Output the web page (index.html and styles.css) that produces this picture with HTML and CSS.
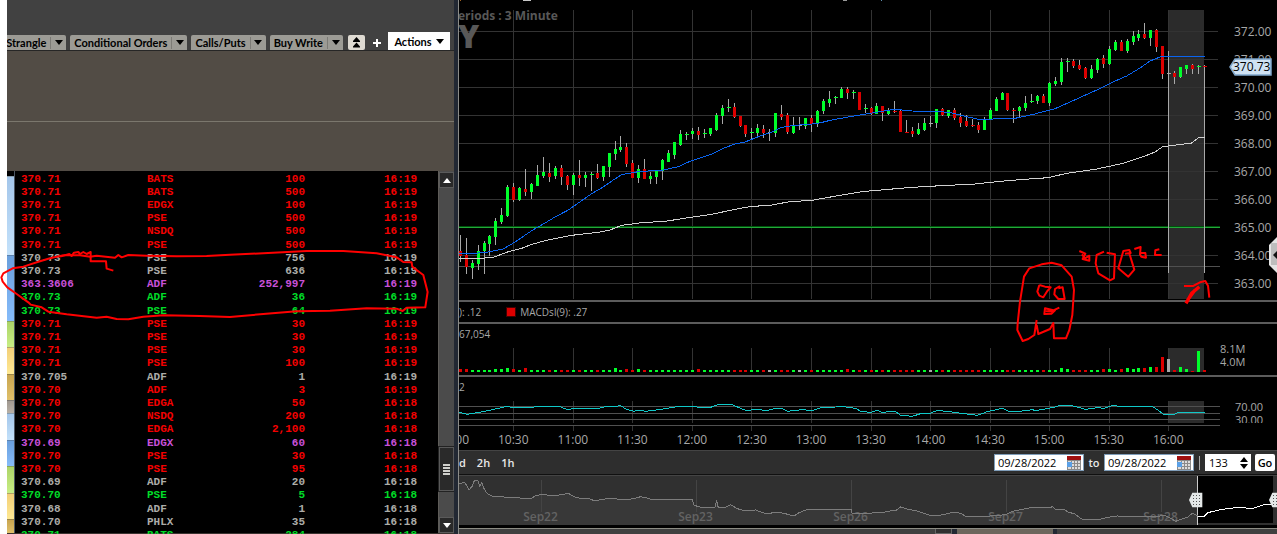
FILE: index.html
```
<!DOCTYPE html>
<html lang="en">
<head>
    <meta charset="UTF-8">
    <meta name="viewport" content="width=device-width, initial-scale=1.0">
    <title>Time and Sales</title>
    <link rel="stylesheet" href="styles.css">
</head>
<body>

<div class="app">
    <section class="left-panel">
        <div class="tab-bar">
            <button class="tab">Strangle <span class="caret"></span></button>
            <button class="tab">Conditional Orders <span class="caret"></span></button>
            <button class="tab">Calls/Puts <span class="caret"></span></button>
            <button class="tab">Buy Write <span class="caret"></span></button>
            <button class="collapse" aria-label="Collapse">
                <svg width="9" height="11" viewBox="0 0 9 11"><path d="M4.5 0L8 4H1zM4.5 5.500L8 9.500H1zM1 4h7v1H1zM1 9.500h7v1H1z"/></svg>
            </button>
            <button class="add" aria-label="Add tab">
                <svg width="8" height="8" viewBox="0 0 8 8"><path d="M3 0h2v3h3v2H5v3H3V5H0V3h3z"/></svg>
            </button>
            <button class="actions">Actions <span class="arrow"></span></button>
        </div>
        <div class="order-area"></div>
        <div class="order-footer"></div>
        <div class="tape">
            <div class="strip" id="strip"></div>
            <table>
                <tbody id="trades"></tbody>
            </table>
            <div class="scrollbar">
                <button aria-label="Scroll up"><span class="up"></span></button>
                <div class="track"></div>
                <div class="thumb"><i></i><i></i><i></i><i></i></div>
                <div class="track-end"></div>
                <button aria-label="Scroll down"><span class="down"></span></button>
            </div>
        </div>
    </section>

    <section class="right-panel">
        <div class="pane price-pane">
            <svg class="plot" id="price" viewBox="0 0 2283 900" preserveAspectRatio="none"></svg>
            <div class="axis price-axis">
                <span>372.00</span><span>371.00</span><span>370.00</span><span>369.00</span><span>368.00</span>
                <span>367.00</span><span>366.00</span><span>365.00</span><span>364.00</span><span>363.00</span>
            </div>
            <div class="watermark">eriods : 3 Minute<b>Y</b></div>
            <div class="price-tag">
                <svg width="43" height="18" viewBox="0 0 43 18"><path d="M1 9L6 1h36v16H6z" fill="#cfe2f3" stroke="#7fa6cc" stroke-width="1.500"/></svg>
                <span>370.73</span>
            </div>
            <button class="side-knob" aria-label="Open side panel">
                <svg width="9" height="36" viewBox="0 0 9 36"><path d="M9 0L1 8v20l8 8z" fill="#e4e4e4"/><path d="M9 6H3v22h6z" fill="#bdbdbd"/><path d="M9 14L5 18l4 4z" fill="#111"/></svg>
            </button>
        </div>
        <div class="pane macd-pane">
            <span>): .12</span><i class="swatch"></i><span>MACDsl(9): .27</span>
        </div>
        <div class="pane volume-pane">
            <div class="plot">
                <p class="legend">67,054</p>
                <svg id="volume" viewBox="0 0 2283 72" preserveAspectRatio="none"></svg>
            </div>
            <div class="axis volume-axis"><span>8.1M</span><span>4.0M</span></div>
        </div>
        <div class="pane rsi-pane">
            <div class="plot">
                <p class="legend">2</p>
                <svg id="rsi" viewBox="0 0 2283 90" preserveAspectRatio="none"></svg>
            </div>
            <div class="axis rsi-axis"><span>70.00</span><span>30.00</span></div>
        </div>
        <div class="times">
            <span>10:00</span><span>10:30</span><span>11:00</span><span>11:30</span><span>12:00</span><span>12:30</span><span>13:00</span><span>13:30</span><span>14:00</span><span>14:30</span><span>15:00</span><span>15:30</span><span>16:00</span>
        </div>
        <form class="range-bar">
            <button type="button" class="range">d</button>
            <button type="button" class="range">2h</button>
            <button type="button" class="range">1h</button>
            <span class="date-box">
                <input type="text" id="from" aria-label="From date" value="09/28/2022">
                <svg width="14" height="14" viewBox="0 0 14 14"><use href="#calendar"/></svg>
            </span>
            <label for="to">to</label>
            <span class="date-box">
                <input type="text" id="to" value="09/28/2022">
                <svg width="14" height="14" viewBox="0 0 14 14"><use href="#calendar"/></svg>
            </span>
            <span class="divider"></span>
            <span class="count-box">
                <input type="text" aria-label="Bars" value="133">
                <svg width="8" height="12" viewBox="0 0 8 12"><path d="M4 0L8 5H0zM4 12L0 7h8z"/></svg>
            </span>
            <button type="button" class="go">Go</button>
        </form>
        <div class="navigator">
            <svg id="nav" viewBox="0 0 2454 147" preserveAspectRatio="none"></svg>
            <div class="days"><span>Sep22</span><span>Sep23</span><span>Sep26</span><span>Sep27</span><span>Sep28</span></div>
            <svg id="navLine" viewBox="0 0 2454 147" preserveAspectRatio="none"></svg>
        </div>
        <div class="dock">
            <div class="dock-scroll"><i></i></div>
            <div class="dock-tab"></div>
            <div class="dock-rest"></div>
        </div>
    </section>
</div>

<!-- red pen marks -->
<svg class="pen" width="1277" height="534" viewBox="0 0 1277 534">
    <g transform="translate(0 170) scale(.3333)">
        <path d="M190 256L150 265 120 274 70 290 38 295 10 310 4 322 8 335 22 352 50 372 85 397 92 404 125 412 145 425 200 433 290 443 320 440 350 447 385 448 430 440 490 436 600 438 690 441 790 432 890 424 990 422 1100 415 1190 416 1208 423 1220 413 1276 412 1283 366 1270 315 1250 300 1237 290 1235 277 1210 276 1190 262 1130 250 1030 243 920 243 790 250 690 254 620 258 530 259 440 257 385 255 365 262 355 255 345 263 290 257 270 260 240 256 190 256"/>
        <path d="M180 260L208 252 215 258 222 248 235 246 240 252 250 246 260 252 272 246V274H318L320 296 340 302"/>
    </g>
    <g transform="translate(1000 235) scale(.3333)">
        <path d="M110 255L103 300 85 312 68 318 52 285 53 265 60 200 72 125 88 100 125 88 155 83 185 91 215 125 222 165 217 240 208 285 198 310H162L160 264 150 282 115 297 110 270"/>
        <path d="M118 150L112 170 118 182 130 187 142 168 152 157 135 155 118 150M180 153L165 162 163 178 175 192H194L188 157 175 160M178 218L160 226 135 220 133 237 155 236 165 226 140 229 160 230"/>
        <path d="M238 48L256 56 248 72 268 77V62L255 70 246 58M312 50L290 60 287 85 295 115 330 136 342 130 345 58 320 53M375 56L392 54 388 45 370 48 355 100 385 125 403 104 388 55M403 42L422 36 420 58 424 65 438 68 436 54 418 54M478 43L466 46 465 60H485"/>
        <path d="M552 153H580L600 142 616 138 624 152 628 188"/>
        <path class="thick" d="M558 205L575 175 598 155M563 195L585 165"/>
    </g>
</svg>

<svg width="0" height="0" class="defs">
    <symbol id="calendar" viewBox="0 0 14 14">
        <path d="M0 0h14v14H0z" fill="#8a8a8a"/>
        <path d="M0 0h14v4H0z" fill="#a01010"/>
        <path d="M1 5h3v2H1zM5 5h2v2H5zM8 5h2v2H8zM11 5h2v2h-2zM5 8h2v2H5zM8 8h2v2H8zM11 8h2v2h-2zM1 11h3v2H1zM5 11h2v2H5zM8 11h2v2H8zM11 11h2v2h-2z" fill="#ddd"/>
        <path d="M0 6h5v5H0z" fill="#5aa0e6"/>
    </symbol>
</svg>

<script src="script.js"></script>
</body>
</html>
```
FILE: styles.css
```
* {
    box-sizing: border-box;
}
body {
    margin: 0;
    background-color: #fff;
    font-family: "Open Sans", "Segoe UI", sans-serif;
    font-size: 12px;
    overflow: hidden;
}
button, input {
    font-family: inherit;
    padding: 0;
    margin: 0;
    border: none;
    background: none;
}
.app {
    display: flex;
    height: 100vh;
    padding-left: 7px;
}

/* left side: tabs and trades */
.left-panel {
    flex: 0 0 447px;
    display: flex;
    flex-direction: column;
    background-color: #524c45;
    overflow: hidden;
}
.tab-bar {
    flex: 0 0 51px;
    display: flex;
    justify-content: flex-end;
    align-items: flex-end;
    padding-right: 4px;
    background-color: #414141;
    border-bottom: 1px solid #262626;
}
.tab {
    display: flex;
    flex: none;
    align-items: center;
    height: 15px;
    margin-right: 4px;
    padding-left: 4px;
    border-radius: 2px 2px 0 0;
    background-color: #9c9b95;
    color: #000;
    font-family: Lato, sans-serif;
    font-size: 11px;
    font-weight: bold;
    white-space: nowrap;
}
.caret {
    display: flex;
    align-items: center;
    justify-content: center;
    width: 16px;
    height: 12px;
    margin-left: 4px;
    border-left: 1px solid #7c7b76;
}
.caret::before, .arrow {
    content: "";
    border: 4px solid transparent;
    border-top: 5px solid #000;
    border-bottom: none;
}
.collapse {
    flex: none;
    display: flex;
    align-items: center;
    justify-content: center;
    width: 17px;
    height: 15px;
    margin-left: 1px;
    border-radius: 2px;
    background-color: #dedad2;
}
.add {
    flex: none;
    width: 8px;
    height: 12px;
    margin: 0 7px 0 8px;
    fill: #fff;
}
.add svg, .collapse svg {
    display: block;
}
.add svg {
    margin-bottom: 2px;
}
.actions {
    flex: none;
    display: flex;
    align-items: center;
    justify-content: center;
    gap: 4px;
    width: 62px;
    height: 18px;
    background-color: #fff;
    color: #000;
    font-family: Lato, sans-serif;
    font-size: 11px;
    font-weight: bold;
}
.order-area {
    flex: 0 0 71px;
    border-bottom: 1px solid #7b776d;
}
.order-footer {
    flex: 0 0 49px;
}
.tape {
    flex: 1;
    min-height: 0;
    display: flex;
    background-color: #000;
    border-bottom: 1px solid #3a3330;
}
.strip {
    width: 8px;
    padding-top: 5px;
    border-right: 1px solid #4c5662;
    overflow: hidden;
}
.strip div {
    border-top: 1px solid rgba(0, 0, 0, 0.3);
}
.sky { background: linear-gradient(#a4c6ea, #c4e2fb); }
.blue { background: linear-gradient(#6a9fdc, #86bcfa); }
.lime { background: linear-gradient(#acd468, #c8ee84); }
.sand { background: linear-gradient(#f2cf78, #ffe993); }
.gold { background: linear-gradient(#c8a550, #e0c06a); }
.stone { background: linear-gradient(#a09890, #b8b0a6); }
.tape table {
    flex: 1;
    table-layout: fixed;
    align-self: flex-start;
    margin-top: 2px;
    border-collapse: collapse;
    font-family: "Liberation Mono", monospace;
    font-size: 11px;
    font-weight: bold;
    line-height: 13px;
}
.tape tr {
    height: 13px;
}
.tape tr:nth-child(5n) {
    height: 14px;
}
.tape td {
    padding: 0;
    vertical-align: top;
}
.tape td:nth-child(1) {
    width: 132px;
    padding-left: 6px;
}
.tape td:nth-child(2) {
    width: 85px;
}
.tape td:nth-child(3) {
    width: 73px;
    text-align: right;
}
.tape td:nth-child(4) {
    padding-right: 21px;
    text-align: right;
}
.red { color: #f40000; }
.green { color: #00dc28; }
.grey { color: #acaca8; }
.violet { color: #c850d8; }
.scrollbar {
    width: 16px;
    display: flex;
    flex-direction: column;
    padding-top: 1px;
    background-color: #4b4b4b;
    border-left: 1px solid #5e5c58;
}
.scrollbar button {
    flex: 0 0 16px;
    display: flex;
    align-items: center;
    justify-content: center;
    background-color: #292929;
    border: 1px solid #5a5a5a;
}
.up, .down {
    border: 4px solid transparent;
}
.up {
    border-top: none;
    border-bottom: 5px solid #fff;
}
.down {
    border-bottom: none;
    border-top: 5px solid #fff;
}
.track {
    flex: 1;
}
.thumb {
    flex: 0 0 44px;
    display: flex;
    flex-direction: column;
    align-items: center;
    justify-content: center;
    gap: 1px;
    background-color: #2a2a2a;
    border: 1px solid #585858;
    outline: 1px solid #222;
}
.thumb i {
    width: 7px;
    height: 2px;
    background-color: #d0d0cc;
}
.track-end {
    flex: 0 0 26px;
}

/* right side: charts */
.right-panel {
    flex: 1;
    min-width: 0;
    display: flex;
    flex-direction: column;
    background-color: #000;
    border-left: 1px solid #8c8c88;
    margin-left: 4px;
    outline: 4px solid #222833;
    overflow: hidden;
    color: #a8a8a8;
}
.pane {
    display: flex;
    flex: none;
    border-bottom: 2px solid #5c5c5c;
}
.plot {
    flex: 1;
    min-width: 0;
}
svg {
    display: block;
}
.plot svg {
    width: 100%;
}
.axis {
    flex: 0 0 57px;
    display: flex;
    flex-direction: column;
}
.price-pane {
    position: relative;
    height: 302px;
}
.price-pane .plot {
    height: 300px;
}
.price-axis {
    padding: 18px 0 0 14px;
    line-height: 28px;
}
.watermark {
    position: absolute;
    left: -1px;
    top: 8px;
    color: #585858;
    font-size: 12px;
    font-weight: bold;
    line-height: 16px;
}
.watermark b {
    display: block;
    font-size: 32px;
    line-height: 24px;
}
.price-tag {
    position: absolute;
    right: 5px;
    top: 58px;
    width: 43px;
    color: #000;
    line-height: 18px;
}
.price-tag svg {
    position: absolute;
}
.price-tag span {
    position: relative;
    padding-left: 4px;
}
.side-knob {
    position: absolute;
    right: 0;
    top: 237px;
}
.macd-pane {
    height: 22px;
    align-items: center;
    font-size: 10px;
}
.swatch {
    width: 10px;
    height: 10px;
    margin: 0 4px 0 25px;
    background-color: #dc0000;
    border: 1px solid #400;
}
.legend {
    height: 24px;
    margin: 0;
    font-size: 10px;
    line-height: 20px;
}
.volume-pane {
    height: 53px;
}
.volume-pane svg {
    height: 24px;
}
.volume-axis {
    padding-top: 18px;
    font-size: 11px;
    line-height: 13px;
}
.rsi-pane {
    height: 54px;
    border-bottom: none;
}
.rsi-pane svg {
    height: 30px;
}
.rsi-axis {
    padding: 23px 0 0 15px;
    height: 46px;
    overflow: hidden;
    font-size: 11px;
    line-height: 13px;
}
.times {
    flex: none;
    display: grid;
    grid-template-columns: repeat(13, 1fr);
    height: 19px;
    margin: 0 79px 0 -35px;
    line-height: 18px;
    text-align: center;
}
.range-bar {
    flex: none;
    display: flex;
    align-items: center;
    height: 25px;
    padding-right: 2px;
    background-color: #2e2e2e;
    border-top: 1px solid #444;
    border-bottom: 1px solid #101010;
    color: #e8e8e8;
    font-weight: 600;
}
.range {
    margin-right: 11px;
    color: #e8e8e8;
    font-size: 11px;
    font-weight: 600;
}
.date-box {
    display: flex;
    align-items: center;
    width: 90px;
    height: 17px;
    padding: 0 2px 0 3px;
    background-color: #fff;
    border: 1px solid #7f9db9;
}
.range + .date-box {
    margin-left: auto;
}
.date-box input {
    flex: 1;
    min-width: 0;
    font-size: 11px;
}
.range-bar label {
    width: 20px;
    text-align: center;
    font-size: 11px;
}
.divider {
    width: 1px;
    height: 14px;
    margin: 0 5px;
    background-color: #aaa;
}
.count-box {
    display: flex;
    align-items: center;
    width: 46px;
    height: 17px;
    padding: 0 3px 0 4px;
    background-color: #fff;
}
.count-box input {
    flex: 1;
    min-width: 0;
    font-size: 11px;
}
.go {
    width: 20px;
    height: 17px;
    margin-left: 4px;
    border-radius: 2px;
    background-color: #fff;
    color: #000;
    font-size: 11px;
    font-weight: 600;
}
.navigator {
    flex: none;
    display: grid;
    height: 50px;
    border-top: 1px solid #444;
    background-color: #303030;
}
.navigator > * {
    grid-area: 1 / 1;
}
.navigator svg {
    width: 100%;
    height: 49px;
}
.days {
    display: grid;
    grid-template-columns: repeat(5, 1fr);
    align-items: end;
    margin: 0 39px 0 4px;
    color: #636363;
    font-size: 12px;
    font-weight: 600;
    line-height: 16px;
    text-align: center;
}
.dock {
    flex: 1;
    display: flex;
    margin-top: 3px;
    background-color: #222833;
    border-top: 1px solid #8c8c84;
}
.dock-scroll {
    flex: 0 0 493px;
    display: flex;
    justify-content: flex-end;
    background-color: #404040;
}
.dock-scroll i {
    width: 17px;
    background-color: #303030;
    border: 1px solid #666;
    border-top: none;
}
.dock-tab {
    flex: 0 0 96px;
    margin: 0 4px 0 5px;
    background-color: #6c665c;
}
.dock-rest {
    flex: 1;
    background-color: #404040;
}

.pen {
    position: absolute;
    left: 0;
    top: 0;
    pointer-events: none;
    fill: none;
    stroke: #f00;
    stroke-width: 6;
    stroke-linejoin: round;
}
.pen .thick {
    stroke-width: 10;
}
.defs {
    position: absolute;
}
```
FILE: script.js
```
// every chart is drawn in units of a third of a pixel
const COLORS = { r: '#dc0000', g: '#00ff2a', w: '#a8a8a8' };

function rect(x, y, w, h, fill) {
    return `<rect x="${x}" y="${y}" width="${w}" height="${h}" fill="${fill}" shape-rendering="crispEdges"/>`;
}
function line(points, color, width = 3) {
    return `<polyline points="${points}" fill="none" stroke="${color}" stroke-width="${width}" shape-rendering="crispEdges"/>`;
}
function candleX(i) {
    return Math.floor(1.2 + 5.954 * i) * 3;
}
function verticals(top, bottom) {
    let out = '';
    for (let i = 9; i < 120; i += 10) {
        out += rect(candleX(i), top, 3, bottom - top, '#333');
    }
    return out;
}

// color, high, body top, body bottom, low
const candles = `r705,753,768,786 r714,766,801,822 g780,789,804,837 g735,753,792,810 g723,729,753,822 g705,708,732,768
g654,663,711,735 g624,645,666,672 g555,561,648,651 r549,561,600,606 g561,564,600,603 r507,567,576,588 g549,552,576,597
g495,525,558,558 g471,516,528,534 r489,519,531,546 g498,504,528,537 r495,504,531,555 r525,528,555,570 g519,525,555,585
r480,525,534,558 g516,525,534,561 g516,522,525,573 r492,519,534,537 g498,498,531,543 g459,459,501,531 g423,447,462,480
g408,441,450,456 r429,441,492,501 r480,489,534,534 g495,507,534,549 r477,507,537,537 g516,528,537,552 g510,513,531,552
g477,480,513,540 g450,459,486,486 g426,426,465,477 g390,402,435,438 g396,402,405,420 g384,393,402,417 r381,393,405,420
g387,399,402,414 g384,384,402,408 g339,345,390,393 g315,324,348,372 g297,321,324,336 r309,321,351,354 r348,348,378,381
r375,375,402,411 g384,396,399,417 g372,384,399,408 r375,387,399,414 w387,396,399,423 g339,339,399,411 r315,342,351,360
r339,345,396,402 g351,375,399,402 w351,375,378,390 g354,354,378,387 r345,354,372,396 g330,333,372,381 g297,303,333,342
g273,297,309,321 g288,291,294,312 g261,267,294,294 r261,267,279,297 g270,276,279,297 r276,276,330,330 g312,324,327,339
r321,324,342,345 g309,318,342,342 r318,318,339,363 g324,333,342,345 r303,333,336,339 r327,333,396,396 r360,396,399,399
r381,393,402,411 g369,387,402,405 g354,369,390,393 w348,369,372,381 g327,327,369,384 r324,327,345,348 g330,330,348,354
r324,330,354,360 r339,351,369,381 r345,363,378,381 r357,375,378,381 r366,375,390,399 g351,357,390,390 g324,330,357,360
g291,297,333,333 g276,279,300,300 r279,279,330,333 r324,330,333,369 g318,321,333,351 g288,309,324,333 g282,303,306,309
g285,288,303,312 r282,288,309,309 g246,249,309,318 g231,243,252,258 g174,186,246,255 g174,183,186,216 r177,183,198,204
r180,195,207,210 r201,204,234,237 g195,207,234,237 g174,177,210,219 r165,174,192,204 g138,147,192,195 g120,126,150,153
r120,126,153,153 g117,123,153,159 g93,108,126,135 g90,102,114,123 r69,102,114,117 g90,90,114,138 r87,90,141,156
r138,138,222,237 w153,219,222,819 r213,219,231,252 g201,201,231,234 g195,195,207,222 r192,195,207,222 g195,198,201,222
r195,198,201,819`.split(/\s+/).map(c => [c[0], ...c.slice(1).split(',').map(Number)]);

function drawPrice() {
    let out = rect(2127, 30, 108, 867, '#2b2b2b');
    for (let y = 93; y < 900; y += 84) {
        out += rect(0, y, 2277, 3, '#333');
    }
    out += verticals(30, 897);
    out += rect(0, 678, 2283, 3, '#00500c') + rect(0, 681, 2283, 3, '#22a83a');
    out += rect(0, 798, 2283, 3, '#505050');
    // bottom edge of the toolbar above
    out += rect(192, 0, 24, 3, '#c8c8c8') + rect(3, 0, 3, 3, '#a06020') + rect(1152, 0, 12, 3, '#999') + rect(1266, 0, 3, 3, '#6090b0');
    candles.forEach(([c, high, top, bottom, low], i) => {
        const x = candleX(i);
        const w = bottom - top === 3 ? 12 : 9;
        out += rect(x, high, 3, low - high, '#a8a8a8');
        out += rect(x - 3, top, w, bottom - top, COLORS[c]);
    });
    out += line('0,775 43,777 103,772 148,755 188,745 213,735 258,722 338,706 418,697 453,690 488,676 548,668 618,664 708,650 758,643 828,628 873,620 938,615 998,604 1053,602 1098,594 1148,585 1208,575 1278,569 1358,562 1448,557 1548,552 1623,544 1683,539 1768,533 1823,520 1913,507 1993,490 2053,470 2088,456 2111,440 2143,436 2198,429 2220,412 2238,412', '#d0d0d0');
    out += line('0,760 43,760 83,757 133,747 173,723 218,692 253,672 288,651 328,630 368,602 398,581 428,564 463,540 488,524 538,515 613,510 658,500 693,484 758,462 793,445 828,432 858,426 903,408 938,396 968,382 1008,376 1073,371 1118,360 1173,350 1228,341 1268,334 1308,328 1358,333 1438,334 1478,339 1518,349 1568,360 1623,355 1668,355 1723,343 1788,326 1833,306 1913,270 1953,250 2003,228 2043,204 2073,183 2108,169 2238,169', '#0a64f0');
    document.getElementById('price').innerHTML = out;
}

function drawVolume() {
    const heights = { 0: 3, 1: 3, 6: 3, 7: 3, 8: 4, 9: 3, 11: 4, 26: 4, 28: 3, 30: 3, 40: 3, 65: 3, 101: 4, 102: 3, 108: 3, 109: 3, 111: 3, 112: 4, 113: 3, 114: 4, 115: 4, 116: 5, 117: 5, 118: 15, 119: 13, 121: 5, 122: 3, 123: 1, 124: 21 };
    let out = rect(2127, 0, 108, 72, '#2b2b2b') + verticals(0, 72);
    candles.forEach(([c], i) => {
        const h = (heights[i] || 2) * 3;
        out += rect(candleX(i) - 3, 72 - h, 9, h, COLORS[c]);
    });
    document.getElementById('volume').innerHTML = out;
}

function drawRsi() {
    let out = rect(2127, 0, 108, 66, '#2b2b2b') + verticals(0, 66) + verticals(72, 90);
    [15, 36, 54, 72].forEach(y => out += rect(0, y, 2283, 3, '#505050'));
    out += line('0,34 25,40 60,34 100,26 145,16 165,21 220,19 235,16 300,16 325,26 345,22 420,22 440,17 475,16 482,12 500,24 525,31 540,27 560,31 600,26 655,17 700,16 730,20 755,19 770,13 790,9 815,9 840,20 860,28 890,26 925,28 950,22 968,22 985,31 1030,26 1060,29 1090,19 1130,18 1150,15 1165,19 1190,22 1205,31 1235,34 1255,28 1268,34 1308,31 1325,43 1360,46 1385,38 1415,36 1435,28 1470,32 1515,38 1555,43 1585,32 1630,22 1650,31 1690,30 1720,26 1730,29 1780,20 1805,13 1835,13 1880,25 1915,20 1935,22 1965,12 1985,18 2000,16 2080,16 2095,26 2112,39 2145,40 2160,34 2190,33 2205,36 2220,33 2238,33', '#10c8c8');
    document.getElementById('rsi').innerHTML = out;
}

function drawNavigator() {
    const past = '0,23 16,19 24,30 30,42 40,30 46,14 56,12 62,30 68,20 76,40 86,54 100,60 120,62 215,68 232,58 260,55 270,60 295,58 328,52 345,62 360,66 390,68 408,75 430,70 460,66 490,72 525,68 545,62 565,66 580,72 700,70 705,88 735,96 768,94 773,72 778,96 800,94 815,86 835,98 855,104 890,102 910,110 925,114 950,108 975,112 1005,120 1020,110 1045,100 1176,100 1180,113 1268,110 1298,104 1310,104 1325,93 1340,98 1370,104 1395,112 1418,120 1440,118 1470,112 1485,108 1505,112 1520,121 1580,121 1640,116 1660,106 1690,100 1720,94 1770,96 1780,92 1790,100 1805,102 1815,100 1830,110 1845,112 1855,120 1870,130 1915,132 1945,124 1975,120 2090,122 2115,118 2130,124 2150,136 2165,130 2185,124 2200,112 2216,120';
    let out = `<polygon points="0,147 ${past} 2216,147" fill="#383838"/>`;
    for (let x = 246; x < 2200; x += 465) {
        out += rect(x, 12, 3, 96, '#444');
    }
    document.getElementById('nav').innerHTML = out;

    out = rect(2214, 0, 228, 141, '#000') + rect(2214, 0, 3, 147, '#ccc');
    out += line(past, '#7c7c7c');
    out += line('2216,120 2236,120 2246,110 2290,100 2330,95 2360,96 2380,98 2390,94 2415,86 2454,84', '#fff');
    // drag handles
    [2208, 2448].forEach(x => {
        out += `<path d="M${x - 18} 72l10 -22h30v44h-30z" fill="#e4e8e8"/>`;
        for (let y = 57; y < 88; y += 9) {
            out += rect(x - 6, y, 3, 3, '#555') + rect(x + 3, y, 3, 3, '#555') + rect(x + 12, y, 3, 3, '#555');
        }
    });
    document.getElementById('navLine').innerHTML = out;
}

const trades = [
    ['red', '370.71', 'BATS', '100', '16:19'],
    ['red', '370.71', 'BATS', '500', '16:19'],
    ['red', '370.71', 'EDGX', '100', '16:19'],
    ['red', '370.71', 'PSE', '500', '16:19'],
    ['red', '370.71', 'NSDQ', '500', '16:19'],
    ['red', '370.71', 'PSE', '500', '16:19'],
    ['grey', '370.73', 'PSE', '756', '16:19'],
    ['grey', '370.73', 'PSE', '636', '16:19'],
    ['violet', '363.3606', 'ADF', '252,997', '16:19'],
    ['green', '370.73', 'ADF', '36', '16:19'],
    ['green', '370.73', 'PSE', '64', '16:19'],
    ['red', '370.71', 'PSE', '30', '16:19'],
    ['red', '370.71', 'PSE', '30', '16:19'],
    ['red', '370.71', 'PSE', '30', '16:19'],
    ['red', '370.71', 'PSE', '100', '16:19'],
    ['grey', '370.705', 'ADF', '1', '16:19'],
    ['red', '370.70', 'ADF', '3', '16:19'],
    ['red', '370.70', 'EDGA', '50', '16:18'],
    ['red', '370.70', 'NSDQ', '200', '16:18'],
    ['red', '370.70', 'EDGA', '2,100', '16:18'],
    ['violet', '370.69', 'EDGX', '60', '16:18'],
    ['red', '370.70', 'PSE', '30', '16:18'],
    ['red', '370.70', 'PSE', '95', '16:18'],
    ['grey', '370.69', 'ADF', '20', '16:18'],
    ['green', '370.70', 'PSE', '5', '16:18'],
    ['grey', '370.68', 'ADF', '1', '16:18'],
    ['grey', '370.70', 'PHLX', '35', '16:18'],
    ['green', '370.71', 'BATS', '284', '16:18']
];
document.getElementById('trades').innerHTML = trades.map(([color, ...cells]) =>
    `<tr class="${color}">${cells.map(c => `<td>${c}</td>`).join('')}</tr>`).join('');

const bands = [['sky', 79], ['blue', 66], ['lime', 26], ['sand', 27], ['gold', 26], ['stone', 13], ['sky', 27], ['blue', 26], ['lime', 27], ['sand', 26], ['gold', 14]];
document.getElementById('strip').innerHTML = bands.map(([name, h]) =>
    `<div class="${name}" style="height: ${h}px"></div>`).join('');

drawPrice();
drawVolume();
drawRsi();
drawNavigator();
```
